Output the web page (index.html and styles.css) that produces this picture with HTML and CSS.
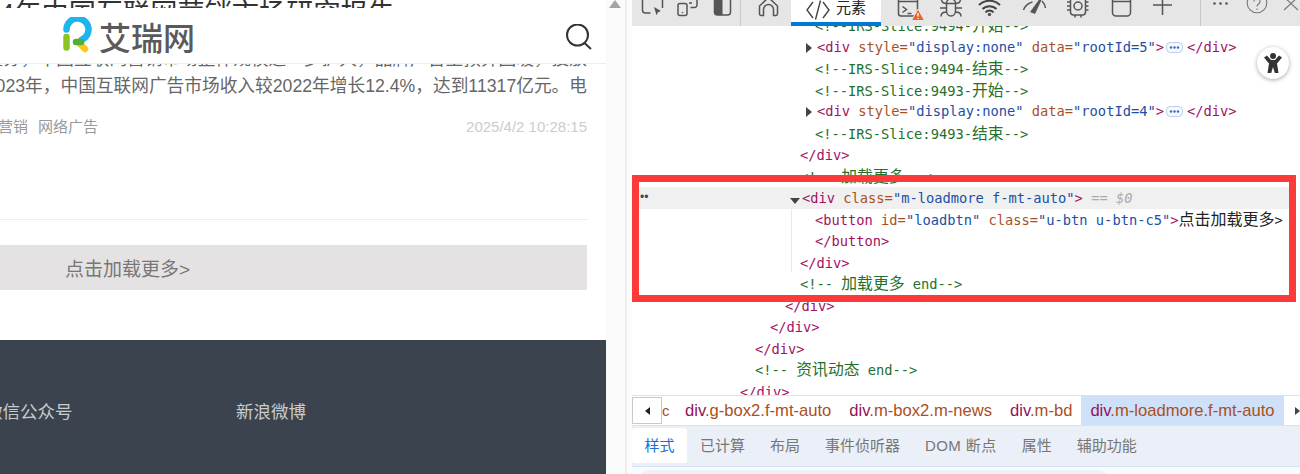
FILE: index.html
```html
<!DOCTYPE html>
<html lang="zh-CN">
<head>
<meta charset="utf-8">
<title>艾瑞网 - 元素</title>
<link rel="stylesheet" href="styles.css">
</head>
<body>
<div class="app">
  <main class="page">
    <header class="site-header">
      <svg class="logo" viewBox="0 0 32 38" width="32" height="38" aria-hidden="true">
        <path class="logo-blue" d="M4.5 12.500 A11 11 0 1 1 20 22.500"/>
        <path class="logo-green" d="M4.500 20 V30.500"/>
        <path class="logo-yellow" d="M16 25 L23 32"/>
        <path class="logo-mid" d="M14 25 H19"/>
      </svg>
      <span class="wordmark">艾瑞网</span>
      <svg class="search" viewBox="0 0 26 26" width="26" height="26" aria-hidden="true">
        <circle cx="11.500" cy="11" r="10.500"/>
        <path d="M18.500 19 L25 25"/>
      </svg>
    </header>
    <div class="article">
      <h1 class="title">2024年中国互联网营销市场研究报告</h1>
      <p class="excerpt">报告显示，数字经济持续复苏，中国互联网营销市场整体规模进一步扩大，品牌广告主预算回暖，投放</p>
      <p class="excerpt">2023年，中国互联网广告市场收入较2022年增长12.4%，达到11317亿元。电</p>
      <div class="meta">
        <span class="tags"><span>营销</span><span>网络广告</span></span>
        <span class="date">2025/4/2 10:28:15</span>
      </div>
      <div class="rule"></div>
      <button class="load-more">点击加载更多&gt;</button>
    </div>
    <footer class="site-footer">
      <span class="f-wechat">微信公众号</span>
      <span class="f-weibo">新浪微博</span>
    </footer>
  </main>
  <div class="gutter"><span class="scroll-up"></span></div>
  <section class="devtools">
    <nav class="toolbar">
      <svg class="tb-icons tb-a" viewBox="632 0 159 26" width="159" height="26" aria-hidden="true">
        <path d="M642.500 -2V10a3 3 0 0 0 3 3h5M662.500 -2V8"/>
        <path class="solid" d="M654 7l7 4-3 1.200-1.500 3z"/>
        <rect x="678" y="3.500" width="9" height="12" rx="2"/>
        <path d="M690.500 7.500h4a2.500 2.500 0 0 0 2.500-2.500V-2M689 3h3"/>
        <circle class="solid" cx="682.500" cy="12.500" r=".8"/>
        <rect x="714.500" y="-4" width="16" height="19" rx="3"/>
        <path class="solid" d="M717.500 -4h5v19h-5a3 3 0 0 1-3-3V-1a3 3 0 0 1 3-3z"/>
        <path class="sep" d="M740.500 0V26"/>
        <path d="M759.500 14V6L768.500 -2.500 777.500 6V14a1.500 1.500 0 0 1-1.500 1.500h-2.500V9.500a5 5 0 0 0-10 0v6H761a1.500 1.500 0 0 1-1.500-1.500z"/>
      </svg>
      <div class="tab-active">
        <svg class="code" viewBox="0 0 24 22" width="24" height="22" aria-hidden="true">
          <path d="M7 3L1 11l6 8M14.500 1.500L9.500 20.500M17 3l6 8-6 8"/>
        </svg>
        <span>元素</span>
      </div>
      <svg class="tb-icons tb-b" viewBox="881 0 320 26" width="320" height="26" aria-hidden="true">
        <rect x="898.500" y="-3" width="19" height="19" rx="2.500"/>
        <path d="M898.500 1.500h19M902.500 6.500l4 3-4 3M907.500 13.500h4"/>
        <path class="warn" d="M918 9l6.500 11.500h-13z"/>
        <path class="warn-mark" d="M918 13v3.500M918 18v1"/>
        <path d="M946.500 3a4.500 4 0 0 1 9 0M946.500 3.500h9v7.500a4.500 5 0 0 1-9 0zM941.500 -1c0 3 2 4.500 5 4.500M960.500 -1c0 3-2 4.500-5 4.500M940 8h6.500M962 8h-6.500M941 16.500c0-3 2-4.500 5.500-4.500M961 16.500c0-3-2-4.500-5.500-4.500"/>
        <path class="bold" d="M979 5a15 15 0 0 1 21 0M982.500 9a10 10 0 0 1 14 0M985.500 12.500a5 5 0 0 1 8 0"/>
        <circle class="solid" cx="989.500" cy="14.500" r="1.700"/>
        <path d="M1023.500 10a13 13 0 0 1 9-8M1042 1a13 13 0 0 1 3.500 7"/>
        <path class="solid" d="M1030 12L1039.500 -1l2 1-6.500 14z"/>
        <rect x="1070.500" y="-2" width="15" height="17" rx="3"/>
        <circle cx="1078" cy="6" r="4"/>
        <path d="M1067 2h3.500M1067 6h3.500M1067 10h3.500M1085.500 2h3M1085.500 6h3M1085.500 10h3M1075 15v2.500M1081 15v2.500"/>
        <rect x="1112.500" y="-4" width="18" height="20" rx="3.500"/>
        <path d="M1112.500 1.500h18"/>
        <path d="M1162.500 -4V15M1153 5h19"/>
        <path class="sep" d="M1200.500 0V26"/>
      </svg>
      <svg class="tb-icons tb-c" viewBox="1201 0 99 26" width="99" height="26" aria-hidden="true">
        <circle class="solid" cx="1214.500" cy="3.500" r="1.300"/>
        <circle class="solid" cx="1220.500" cy="3.500" r="1.300"/>
        <circle class="solid" cx="1226.500" cy="3.500" r="1.300"/>
        <circle class="thin" cx="1257" cy="3" r="9.800"/>
        <path class="thin" d="M1254 1.500a3 3 0 1 1 4.500 2.500c-1 .7-1.500 1.300-1.500 2.500M1257 8.500v1.500"/>
        <path class="thin" d="M1284 -3L1298 10M1298 -3L1284 10"/>
      </svg>
    </nav>
    <div class="dom">
      <div class="rows">
        <div class="row lv5 cm">&lt;!--IRS-Slice:9494-<span class="cjk">开始</span>--&gt;</div>
        <div class="row lv5 has-child"><i class="tri-r"></i><b class="t">&lt;div</b> <b class="a">style=</b><b class="v">"display:none"</b> <b class="a">data=</b><b class="v">"rootId=5"</b><b class="t">&gt;</b><svg class="more" viewBox="0 0 17 11" width="17" height="11" aria-hidden="true"><rect x=".5" y=".5" width="16" height="10" rx="4"/><circle cx="5" cy="5.500" r="1.200"/><circle cx="8.500" cy="5.500" r="1.200"/><circle cx="12" cy="5.500" r="1.200"/></svg><b class="t">&lt;/div&gt;</b></div>
        <div class="row lv5 cm">&lt;!--IRS-Slice:9494-<span class="cjk">结束</span>--&gt;</div>
        <div class="row lv5 cm">&lt;!--IRS-Slice:9493-<span class="cjk">开始</span>--&gt;</div>
        <div class="row lv5 has-child"><i class="tri-r"></i><b class="t">&lt;div</b> <b class="a">style=</b><b class="v">"display:none"</b> <b class="a">data=</b><b class="v">"rootId=4"</b><b class="t">&gt;</b><svg class="more" viewBox="0 0 17 11" width="17" height="11" aria-hidden="true"><rect x=".5" y=".5" width="16" height="10" rx="4"/><circle cx="5" cy="5.500" r="1.200"/><circle cx="8.500" cy="5.500" r="1.200"/><circle cx="12" cy="5.500" r="1.200"/></svg><b class="t">&lt;/div&gt;</b></div>
        <div class="row lv5 cm">&lt;!--IRS-Slice:9493-<span class="cjk">结束</span>--&gt;</div>
        <div class="row lv4 t">&lt;/div&gt;</div>
        <div class="row lv4 cm">&lt;!-- <span class="cjk">加载更多</span> --&gt;</div>
        <div class="row lv4 has-child selected"><span class="dots">••</span><i class="tri-d"></i><b class="t">&lt;div</b> <b class="a">class=</b><b class="v">"m-loadmore f-mt-auto"</b><b class="t">&gt;</b> <em class="eq">== $0</em></div>
        <div class="row lv5"><b class="t">&lt;button</b> <b class="a">id=</b><b class="v">"loadbtn"</b> <b class="a">class=</b><b class="v">"u-btn u-btn-c5"</b><b class="t">&gt;</b><span class="cjk txt wide">点击加载更多</span><b class="txt">&gt;</b></div>
        <div class="row lv5 t">&lt;/button&gt;</div>
        <div class="row lv4 t">&lt;/div&gt;</div>
        <div class="row lv4 cm">&lt;!-- <span class="cjk">加载更多</span> end--&gt;</div>
        <div class="row lv3 t">&lt;/div&gt;</div>
        <div class="row lv2 t">&lt;/div&gt;</div>
        <div class="row lv1 t">&lt;/div&gt;</div>
        <div class="row lv1 cm">&lt;!-- <span class="cjk">资讯动态</span> end--&gt;</div>
        <div class="row lv0 t">&lt;/div&gt;</div>
      </div>
      <span class="guide"></span>
      <div class="redbox"></div>
      <div class="a11y">
        <svg viewBox="0 0 22 22" width="22" height="22" aria-hidden="true">
          <circle cx="11" cy="4" r="3"/>
          <path d="M2 5.500 L5 3.500 L9 8 H13 L17 3.500 L20 5.500 L15 11.500 L16.500 21 H12.800 L11 15 L9.200 21 H5.500 L7 11.500z"/>
        </svg>
      </div>
    </div>
    <div class="crumbs">
      <span class="crumb-btn"><i class="tri-l"></i></span>
      <span class="crumb-clip">c</span>
      <span class="crumb"><b class="ct">div</b><b class="cc">.g-box2.f-mt-auto</b></span>
      <span class="crumb"><b class="ct">div</b><b class="cc">.m-box2.m-news</b></span>
      <span class="crumb"><b class="ct">div</b><b class="cc">.m-bd</b></span>
      <span class="crumb crumb-on"><b class="ct">div</b><b class="cc">.m-loadmore.f-mt-auto</b></span>
      <span class="crumb-next"><i class="tri-nx"></i></span>
    </div>
    <div class="tabs">
      <span class="tab tab-on">样式</span>
      <span class="tab">已计算</span>
      <span class="tab">布局</span>
      <span class="tab">事件侦听器</span>
      <span class="tab tab-dom">DOM 断点</span>
      <span class="tab">属性</span>
      <span class="tab">辅助功能</span>
    </div>
    <div class="filter-strip"><div class="filter"></div></div>
  </section>
</div>
</body>
</html>
```
FILE: styles.css
```css
* { box-sizing: border-box; }
html, body { margin: 0; height: 474px; overflow: hidden; background: #fff; }
body { font-family: "Liberation Sans", "Noto Sans CJK SC", sans-serif; }
.app { display: flex; height: 474px; }

/* left: web page */
.page { position: relative; width: 606px; flex: none; overflow: hidden; display: flex; flex-direction: column; background: #fff; }
.site-header { position: absolute; top: 8px; left: 0; right: 0; height: 56px; background: #fff; border-bottom: 1px solid #eee; z-index: 2; display: flex; align-items: flex-start; }
.logo { position: absolute; left: 62px; top: 9px; }
.logo path { fill: none; stroke-width: 6.500; stroke-linecap: round; }
.logo-blue { stroke: #1cb5f0; }
.logo-green { stroke: #8cc31f; }
.logo-yellow { stroke: #f8c91a; }
.logo-mid { stroke: #4fae3c; }
.wordmark { position: absolute; left: 99px; top: 12px; font-size: 32px; line-height: 38px; color: #5a5a5a; font-weight: 500; white-space: nowrap; }
.search { position: absolute; left: 566px; top: 16px; }
.search circle, .search path { fill: none; stroke: #333; stroke-width: 2; }

.article { display: flex; flex-direction: column; padding-right: 19px; flex: none; }
.title { margin: 0; font-size: 27.200px; line-height: 27px; font-weight: 400; color: #333; white-space: nowrap; display: flex; justify-content: flex-end; width: 395px; align-self: flex-start; }
.excerpt { margin: 0; font-size: 17.700px; line-height: 27px; color: #666; white-space: nowrap; display: flex; justify-content: flex-end; }
.title + .excerpt { margin-top: 18.500px; }
.meta { display: flex; justify-content: space-between; margin-top: 17.500px; line-height: 20px; font-size: 15px; height: 20px; }
.tags { display: flex; gap: 10px; color: #999; font-size: 15px; margin-left: -2px; }
.date { color: #ccc; }
.rule { height: 1px; background: #eee; margin-top: 82px; }
.load-more { display: block; border: 0; margin-top: 25px; height: 45px; background: #e4e2e3; color: #777; font: 19px "Liberation Sans", "Noto Sans CJK SC", sans-serif; text-align: left; padding: 0 0 0 65px; width: 100%; }
.site-footer { margin-top: 50px; flex: 1; background: #3b444e; color: #c9cbcd; font-size: 17.500px; line-height: 24px; padding-top: 60px; display: flex; margin-left: -15px; }
.f-wechat { width: 251px; white-space: nowrap; }
.f-weibo { white-space: nowrap; }

/* gutter */
.gutter { width: 26px; flex: none; background: #fafafa; border-right: 5px solid #fbfbfb; box-shadow: inset -2px 0 0 #eeeeee; position: relative; }
.scroll-up { position: absolute; left: 3px; top: 0; width: 0; height: 0; border-left: 6px solid transparent; border-right: 6px solid transparent; border-bottom: 8px solid #a3a3a3; }

/* devtools */
.devtools { flex: 1; min-width: 0; display: flex; flex-direction: column; background: #fff; }
.toolbar { height: 26px; flex: none; background: #e6e6e6; display: flex; overflow: hidden; }
.tb-icons { flex: none; display: block; overflow: hidden; }
.tb-icons path, .tb-icons rect, .tb-icons circle { fill: none; stroke: #555; stroke-width: 1.500; }
.tb-icons .solid { fill: #555; stroke: none; }
.tb-icons .bold { stroke-width: 2; stroke: #444; }
.tb-icons .sep { stroke: #c8c8c8; stroke-width: 1; }
.tb-icons .warn { fill: #e8642c; stroke: #e6e6e6; stroke-width: 1; }
.tb-icons .warn-mark { stroke: #fff; stroke-width: 1.300; }
.tb-icons .thin { stroke: #777; stroke-width: 1.100; }
.tab-active { width: 90px; flex: none; height: 26px; background: #fff; border-bottom: 4px solid #0078d4; display: flex; align-items: flex-start; gap: 6px; padding-left: 15px; font-size: 15px; line-height: 16px; color: #222; }
.code { margin-top: -1px; flex: none; }
.code path { fill: none; stroke: #444; stroke-width: 1.400; }

.dom { position: relative; height: 369px; flex: none; overflow: hidden; }
.rows { margin-top: -11px; font: 13.730px/23.500px "DejaVu Sans Mono", "Noto Sans CJK SC", monospace; }
.row { height: 21.500px; white-space: pre; position: relative; }
.row b { font-weight: 400; }
.lv0 { padding-left: 108px; }
.lv1 { padding-left: 123px; }
.lv2 { padding-left: 138px; }
.lv3 { padding-left: 153px; }
.lv4 { padding-left: 168px; }
.lv5 { padding-left: 183px; }
.has-child { margin-left: 2px; line-height: 21.500px; }
.selected { background: #f0f0f0; margin-left: 6px; margin-right: 8px; padding-left: 164px; line-height: 23.500px; }
.t { color: #a1125f; }
.a { color: #a9501f; }
.v { color: #1b4fa5; }
.cm { color: #23702a; }
.cjk { font-size: 15.800px; line-height: 0; font-family: "Noto Sans CJK SC", sans-serif; }
.wide { font-size: 16px; }
.txt { color: #222; }
.eq { color: #aaa; font-style: italic; }
.dots { position: absolute; left: 2px; top: 0; font-size: 12px; line-height: 20px; color: #444; letter-spacing: 0; font-family: "Liberation Sans", sans-serif; }
.tri-r { display: inline-block; width: 0; height: 0; margin-left: -11px; margin-right: 5px; border-left: 6px solid #444; border-top: 5px solid transparent; border-bottom: 5px solid transparent; vertical-align: -1px; }
.tri-d { display: inline-block; width: 0; height: 0; margin-left: -12px; margin-right: 2px; border-top: 6px solid #444; border-left: 5px solid transparent; border-right: 5px solid transparent; vertical-align: -1px; }
.more { margin: 0 4px 0 2px; vertical-align: -1px; }
.more rect { fill: #f6f9fe; stroke: #b5cdf0; }
.more circle { fill: #2a6fd0; }
.guide { position: absolute; left: 159px; top: 183px; width: 1px; height: 63px; background: #e6e8f3; }
.redbox { position: absolute; left: 0; top: 149px; width: 664px; height: 127px; border: 7px solid #fd3a3a; }
.a11y { position: absolute; left: 625px; top: 21px; width: 32px; height: 32px; border-radius: 50%; background: #fff; box-shadow: 0 1px 4px rgba(0,0,0,.35); display: flex; align-items: center; justify-content: center; }
.a11y svg { fill: #333; }

.crumbs { height: 31px; flex: none; display: flex; align-items: stretch; border-top: 1px solid #d8e2f2; border-bottom: 1px solid #d8e2f2; font-size: 16.600px; line-height: 29px; white-space: nowrap; overflow: hidden; }
.crumb-btn { width: 30px; flex: none; margin: 1px 0 -1px; height: 27px; background: #fff; border: 1px solid #c9c9c9; display: flex; align-items: center; justify-content: center; }
.tri-l { width: 0; height: 0; border-right: 5px solid #222; border-top: 4px solid transparent; border-bottom: 4px solid transparent; }
.crumb-clip { width: 23px; flex: none; color: #a9501f; font-size: 15px; }
.crumb { flex: none; margin-right: 18px; }
.crumb .ct { font-weight: 400; color: #93125c; }
.crumb .cc { font-weight: 400; color: #a9501f; }
.crumb-on { background: #cfe0f9; padding: 0 9px; margin-left: -9px; margin-right: 0; }
.crumb-next { flex: none; display: flex; align-items: center; padding-left: 11px; }
.tri-nx { width: 0; height: 0; border-left: 5px solid #444; border-top: 4px solid transparent; border-bottom: 4px solid transparent; }

.tabs { height: 41px; flex: none; background: #eaeff8; border-bottom: 1px solid #d6e2f5; display: flex; align-items: stretch; gap: 25px; padding: 2px 0 3px; font-size: 15px; color: #777; white-space: nowrap; }
.tab { line-height: 35px; }
.tab-on { width: 55px; margin-right: -12px; text-align: center; background: #fff; color: #1a6fd6; border-radius: 3px; }
.tab-dom { letter-spacing: .4px; }
.filter-strip { flex: 1; background: #fafbfd; padding: 3px 193px 0 8px; }
.filter { height: 12px; border-radius: 8px 8px 0 0; background: #eef1f7; }
```
